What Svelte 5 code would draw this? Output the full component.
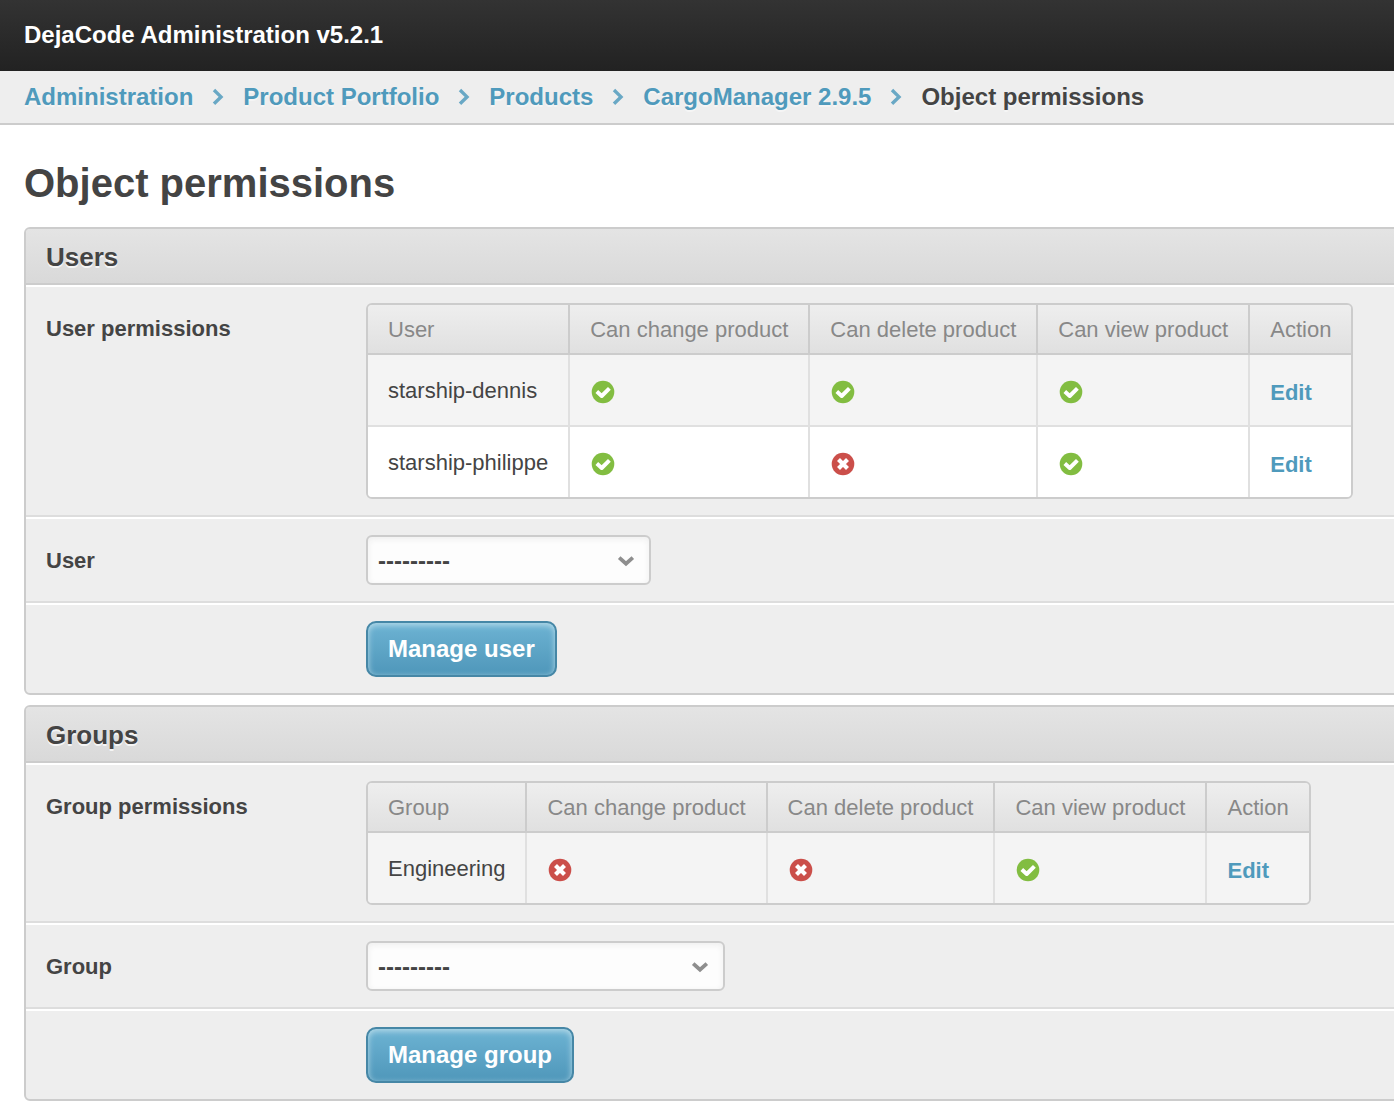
<script>
    const crumbs = ["Administration", "Product Portfolio", "Products", "CargoManager 2.9.5"];

    const modules = [
        {
            title: "Users",
            label: "User",
            selectWidth: 285,
            button: "Manage user",
            rows: [
                { name: "starship-dennis", perms: [true, true, true] },
                { name: "starship-philippe", perms: [true, false, true] },
            ],
        },
        {
            title: "Groups",
            label: "Group",
            selectWidth: 359,
            button: "Manage group",
            rows: [{ name: "Engineering", perms: [false, false, true] }],
        },
    ];
</script>

<header>DejaCode Administration v5.2.1</header>

<nav>
    {#each crumbs as crumb}
        <a href="#top">{crumb}</a>
        <svg class="arrow" width="12" height="18" viewBox="0 0 12 18">
            <path d="M2 2 L9 8.9 L2 15.8" />
        </svg>
    {/each}
    <span>Object permissions</span>
</nav>

<main>
    <h1>Object permissions</h1>

    {#each modules as module}
        <section>
            <h2>{module.title}</h2>

            <div class="row">
                <div class="label">{module.label} permissions</div>
                <table>
                    <thead>
                        <tr>
                            <th>{module.label}</th>
                            <th>Can change product</th>
                            <th>Can delete product</th>
                            <th>Can view product</th>
                            <th>Action</th>
                        </tr>
                    </thead>
                    <tbody>
                        {#each module.rows as row}
                            <tr>
                                <td>{row.name}</td>
                                {#each row.perms as allowed}
                                    <td>
                                        <svg class="status" width="26" height="26" viewBox="0 0 26 26">
                                            {#if allowed}
                                                <circle cx="13" cy="13" r="11.3" fill="#82bd41" />
                                                <path d="M6.8 12.6 L11.7 17 L19.4 9.4" stroke-width="4" />
                                            {:else}
                                                <circle cx="13" cy="13" r="11.3" fill="#cb4f4a" />
                                                <path d="M8.5 8.5 L17.5 17.5 M17.5 8.5 L8.5 17.5" stroke-width="4.2" />
                                            {/if}
                                        </svg>
                                    </td>
                                {/each}
                                <td><a href="#edit">Edit</a></td>
                            </tr>
                        {/each}
                    </tbody>
                </table>
            </div>

            <div class="row">
                <div class="label">{module.label}</div>
                <div class="select" style="width: {module.selectWidth}px">
                    <span>---------</span>
                    <svg width="18" height="12" viewBox="0 0 18 12">
                        <path d="M2.2 2.6 L9 8.6 L15.8 2.6" />
                    </svg>
                </div>
            </div>

            <div class="row">
                <div class="label"></div>
                <button type="button">{module.button}</button>
            </div>
        </section>
    {/each}
</main>

<style>
    :global(body) {
        background: #fff;
        color: #444;
        font-family: "Liberation Sans", Arial, Helvetica, sans-serif;
        font-size: 22px;
        overflow: hidden;
    }

    a {
        color: #4f9abc;
        font-weight: bold;
        text-decoration: none;
    }

    header {
        box-sizing: border-box;
        height: 71px;
        padding: 0 24px;
        color: #fff;
        font-size: 24px;
        font-weight: bold;
        line-height: 70px;
        background: linear-gradient(#333, #222);
    }

    nav {
        display: flex;
        height: 52px;
        padding: 0 24px;
        font-size: 24px;
        font-weight: bold;
        line-height: 52px;
        text-shadow: 0 2px 0 #f5f5f5;
        white-space: nowrap;
        background: #eee;
        border-bottom: 2px solid #ccc;
    }

    .arrow {
        margin: 17px 19px 0 19px;
    }

    .arrow path {
        fill: none;
        stroke: #69a8c5;
        stroke-width: 3.4;
    }

    main {
        padding: 34px 0 0 24px;
    }

    h1 {
        margin: 0 0 20px;
        font-size: 40px;
        line-height: 48px;
    }

    section {
        box-sizing: border-box;
        width: 1400px;
        margin-bottom: 10px;
        border: 2px solid #ccc;
        border-radius: 6px;
        background: #eee;
        overflow: hidden;
    }

    h2 {
        height: 54px;
        margin: 0;
        padding: 0 20px;
        font-size: 26px;
        line-height: 56px;
        text-shadow: 0 2px 0 #f5f5f5;
        background: linear-gradient(#e4e4e4, #d9d9d9);
        border-bottom: 2px solid #ccc;
    }

    .row {
        display: flex;
        align-items: flex-start;
        padding: 16px 20px;
        border-top: 2px solid #fff;
        border-bottom: 2px solid #ddd;
    }

    .row:last-child {
        border-bottom: 0;
    }

    .label {
        width: 320px;
        padding-top: 13px;
        font-weight: bold;
        line-height: 26px;
    }

    table {
        border: 2px solid #ccc;
        border-radius: 6px;
        border-spacing: 0;
        overflow: hidden;
    }

    th {
        height: 46px;
        padding: 2px 20px 0;
        color: #888;
        font-weight: normal;
        line-height: 46px;
        text-align: left;
        white-space: nowrap;
        background: linear-gradient(#eee, #e0e0e0);
        border-right: 2px solid #ccc;
        border-bottom: 2px solid #ccc;
    }

    td {
        height: 68px;
        padding: 2px 20px 0;
        line-height: 68px;
        vertical-align: top;
        background: #f4f4f4;
        border-right: 2px solid #e0e0e0;
        border-bottom: 2px solid #e0e0e0;
    }

    th:last-child,
    td:last-child {
        border-right: 0;
    }

    td a {
        display: block;
        height: 68px;
        line-height: 72px;
    }

    tr:nth-child(even) td {
        background: #fff;
    }

    tr:last-child td {
        border-bottom: 0;
    }

    .status {
        display: block;
        margin-top: 22px;
    }

    .status path {
        fill: none;
        stroke: #fff;
        stroke-linejoin: round;
    }

    .select {
        box-sizing: border-box;
        display: flex;
        align-items: center;
        justify-content: space-between;
        height: 50px;
        padding: 2px 14px 0 10px;
        font-size: 24px;
        font-weight: bold;
        background: #fdfdfd;
        border: 2px solid #ccc;
        border-radius: 6px;
        box-shadow: inset 0 2px 6px #eee;
    }

    .select path {
        fill: none;
        stroke: #8e8e8e;
        stroke-width: 3.8;
    }

    button {
        height: 56px;
        padding: 0 20px;
        color: #fff;
        font: bold 24px "Liberation Sans", Arial, sans-serif;
        background: linear-gradient(#6db3d3, #4f97ba);
        border: 2px solid #4687a6;
        border-radius: 10px;
        box-shadow: inset 0 2px 6px #b8dbe9;
    }
</style>
